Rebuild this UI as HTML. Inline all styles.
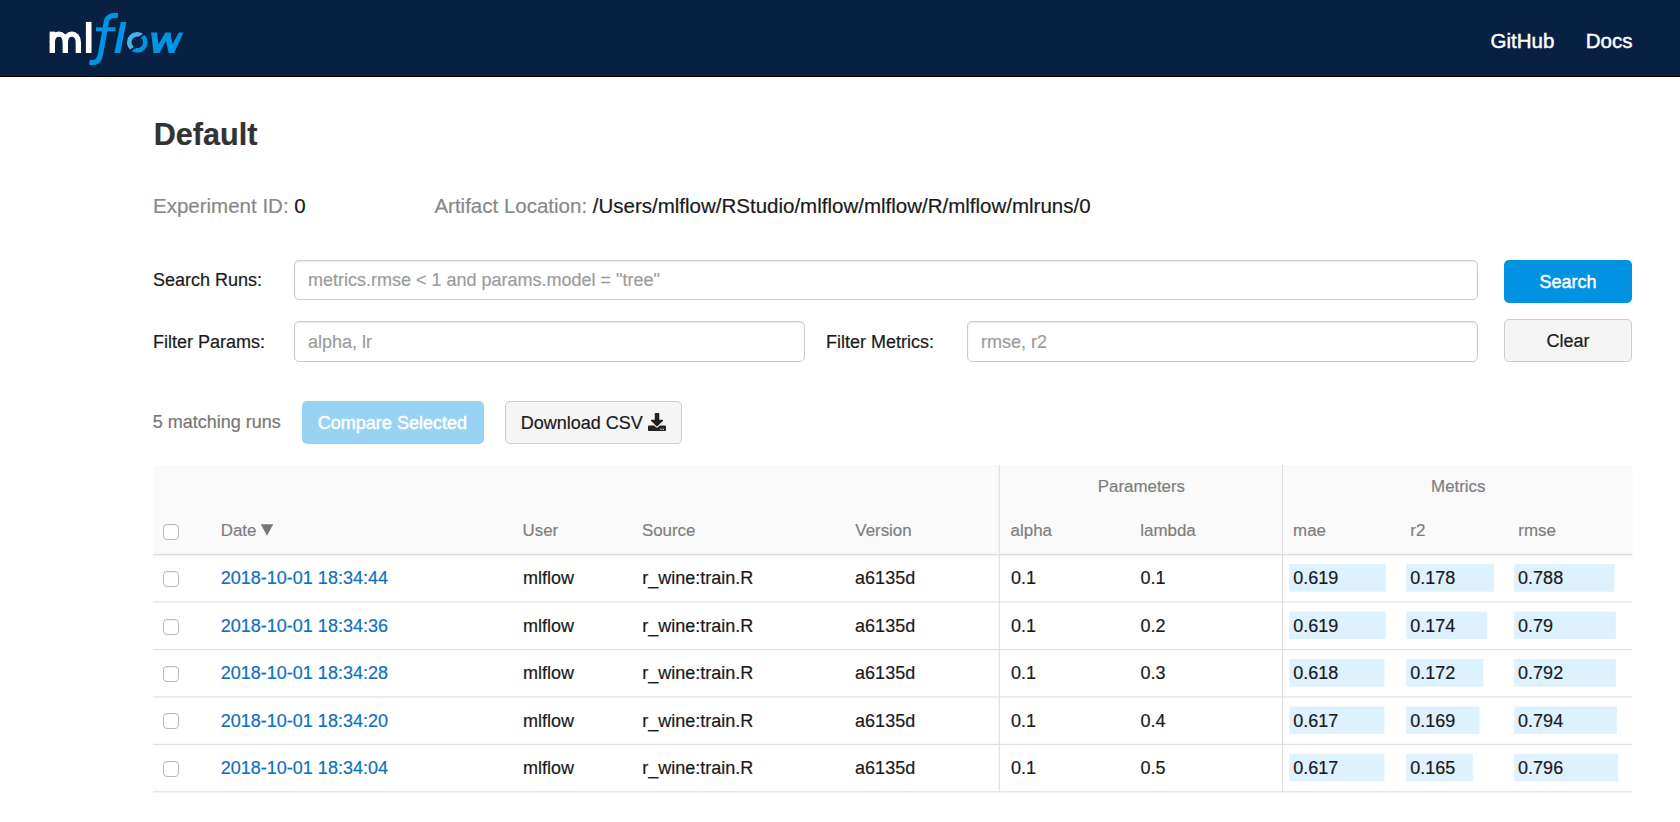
<!DOCTYPE html>
<html lang="en">
<head>
<meta charset="utf-8">
<title>MLflow</title>
<style>
html,body{margin:0;padding:0;}
body{width:1680px;height:822px;overflow:hidden;background:#fff;position:relative;font-family:"Liberation Sans",sans-serif;}
.t{position:absolute;white-space:nowrap;line-height:1;font-family:"Liberation Sans",sans-serif;-webkit-text-stroke:0.2px currentColor;}
.w{-webkit-text-stroke:0.45px #fff;}
.abs{position:absolute;box-sizing:border-box;}
#hdr{left:0;top:0;width:1680px;height:77px;background:#082142;border-bottom:1px solid #000;}
.inp{border:1px solid #ccc;border-radius:5px;background:#fff;box-shadow:inset 0 1px 2px rgba(0,0,0,.1);}
.btn{border-radius:5px;}
.btn-p{background:#0193e1;}
.btn-d{background:#f5f5f5;border:1px solid #ccc;}
.btn-dis{background:#99d3f3;}
.cb{width:16px;height:16px;border:1px solid #b9b9b9;border-radius:4px;background:#fff;box-shadow:inset 0 1px 1px rgba(0,0,0,.04);}
</style>
</head>
<body>

<div id="hdr" class="abs"></div>
<svg class="abs" style="left:40px;top:5px;" width="150" height="65" viewBox="40 5 150 65">
<g fill="none" stroke="#ffffff" stroke-width="5.36" stroke-linecap="butt" stroke-linejoin="round">
<path d="M52.3 53.0 V31.6"/>
<path d="M52.3 42.5 C52.3 31.34 65.32 31.34 65.32 42.5 V53.0"/>
<path d="M65.32 42.5 C65.32 31.34 78.35 31.34 78.35 42.5 V53.0"/>
</g>
<rect x="85.9" y="21.9" width="5.6" height="31.10" fill="#ffffff"/>
<path d="M89.4 62.3 C96.6 63.6 99.3 60.3 100.5 54.6 L106.3 21.9 C107.3 16.6 110.6 15.0 117.9 15.5" fill="none" stroke="#0194e2" stroke-width="5.2" stroke-linecap="butt"/>
<rect x="96.0" y="27.3" width="19.6" height="4.0" fill="#0194e2"/>
<path d="M120.7 22.1 L126.3 22.1 L120.3 52.95 L114.4 52.95 Z" fill="#0194e2"/>
<defs><clipPath id="cl"><polygon points="113.26,60.45 138.42,44.11 135.05,38.91 160.21,22.57 177.28,2.35 97.28,2.35"/></clipPath><clipPath id="cb"><polygon points="114.35,62.13 139.51,45.79 136.14,40.59 161.30,24.25 177.28,82.35 97.28,82.35"/></clipPath></defs>
<circle cx="137.28" cy="42.35" r="8.075" fill="none" stroke="#47b3e8" stroke-width="4.65" clip-path="url(#cl)"/>
<circle cx="137.28" cy="42.35" r="8.075" fill="none" stroke="#0194e2" stroke-width="4.65" clip-path="url(#cb)"/>
<polygon points="151.06,32.43 157.10,32.43 158.46,44.30 165.47,32.43 170.53,32.43 172.48,44.30 178.90,32.43 183.38,32.43 174.23,52.95 168.78,52.95 165.86,40.80 159.63,52.95 153.59,52.95" fill="#0194e2"/>
</svg>
<div class="t w" style="left:1490.50px;top:30.55px;font-size:20.5px;color:#fff;">GitHub</div>
<div class="t w" style="left:1585.70px;top:30.55px;font-size:20.5px;color:#fff;">Docs</div>
<div class="t " style="left:153.70px;top:119.30px;font-size:30.6px;color:#333;font-weight:bold;">Default</div>
<div class="t " style="left:153.00px;top:195.65px;font-size:20.5px;color:#1a1a1a;"><span style="color:#888">Experiment ID:</span> 0</div>
<div class="t " style="left:434.40px;top:195.65px;font-size:20.5px;color:#1a1a1a;"><span style="color:#888">Artifact Location:</span> /Users/mlflow/RStudio/mlflow/mlflow/R/mlflow/mlruns/0</div>
<div class="t " style="left:152.90px;top:271.16px;font-size:18px;color:#1a1a1a;">Search Runs:</div>
<div class="abs inp" style="left:294px;top:260px;width:1184px;height:40px;"></div>
<div class="t " style="left:308.00px;top:271.16px;font-size:18px;color:#9c9c9c;">metrics.rmse &lt; 1 and params.model = "tree"</div>
<div class="abs btn btn-p" style="left:1504px;top:260px;width:128px;height:43px;"></div>
<div class="t w" style="left:1368.00px;width:400px;text-align:center;top:272.56px;font-size:18px;color:#fff;">Search</div>
<div class="t " style="left:152.90px;top:333.06px;font-size:18px;color:#1a1a1a;">Filter Params:</div>
<div class="abs inp" style="left:294px;top:321px;width:511px;height:41px;"></div>
<div class="t " style="left:308.00px;top:333.06px;font-size:18px;color:#9c9c9c;">alpha, lr</div>
<div class="t " style="left:826.00px;top:333.06px;font-size:18px;color:#1a1a1a;">Filter Metrics:</div>
<div class="abs inp" style="left:967px;top:321px;width:511px;height:41px;"></div>
<div class="t " style="left:981.00px;top:333.06px;font-size:18px;color:#9c9c9c;">rmse, r2</div>
<div class="abs btn btn-d" style="left:1504px;top:319px;width:128px;height:43px;"></div>
<div class="t " style="left:1368.00px;width:400px;text-align:center;top:331.56px;font-size:18px;color:#1a1a1a;">Clear</div>
<div class="t " style="left:152.70px;top:412.76px;font-size:18px;color:#777;">5 matching runs</div>
<div class="abs btn btn-dis" style="left:302px;top:401px;width:182px;height:43px;"></div>
<div class="t w" style="left:192.40px;width:400px;text-align:center;top:413.76px;font-size:18px;color:#fff;">Compare Selected</div>
<div class="abs btn btn-d" style="left:505px;top:401px;width:177px;height:43px;"></div>
<div class="t " style="left:520.80px;top:413.76px;font-size:18px;color:#1a1a1a;">Download CSV</div>
<svg class="abs" style="left:648px;top:413px;" width="18" height="18" viewBox="0 0 512 512"><path fill="#222" d="M216 0h80c13.3 0 24 10.7 24 24v168h87.7c17.8 0 26.7 21.5 14.1 34.1L269.7 378.3c-7.500 7.500-19.800 7.500-27.300 0L90.100 226.100c-12.600-12.600-3.700-34.100 14.100-34.100H192V24c0-13.300 10.700-24 24-24zm296 376v112c0 13.300-10.700 24-24 24H24c-13.300 0-24-10.700-24-24V376c0-13.300 10.700-24 24-24h146.700l49 49c20.100 20.100 52.500 20.100 72.600 0l49-49H488c13.300 0 24 10.700 24 24zm-124 88c0-11-9-20-20-20s-20 9-20 20 9 20 20 20 20-9 20-20zm64 0c0-11-9-20-20-20s-20 9-20 20 9 20 20 20 20-9 20-20z"/></svg>
<svg class="abs" style="left:0;top:0;" width="1680" height="822" viewBox="0 0 1680 822">
<rect x="153" y="465" width="1479.5" height="89.80" fill="#fafafa"/>
<rect x="153" y="553.80" width="1479.5" height="1.7" fill="#dfdfdf"/>
<rect x="153" y="601.57" width="1479.5" height="1.1" fill="#dedede"/>
<rect x="153" y="648.99" width="1479.5" height="1.1" fill="#dedede"/>
<rect x="153" y="696.41" width="1479.5" height="1.1" fill="#dedede"/>
<rect x="153" y="743.83" width="1479.5" height="1.1" fill="#dedede"/>
<rect x="153" y="791.25" width="1479.5" height="1.1" fill="#dedede"/>
<rect x="998.8" y="465" width="1.1" height="326.90" fill="#dedede"/>
<rect x="1282.0" y="465" width="1.1" height="326.90" fill="#dedede"/>
<rect x="1289.3" y="564.20" width="96.5" height="27.5" fill="#def1ff"/>
<rect x="1406.3" y="564.20" width="87.7" height="27.5" fill="#def1ff"/>
<rect x="1514.2" y="564.20" width="100.3" height="27.5" fill="#def1ff"/>
<rect x="1289.3" y="611.62" width="96.5" height="27.5" fill="#def1ff"/>
<rect x="1406.3" y="611.62" width="81.1" height="27.5" fill="#def1ff"/>
<rect x="1514.2" y="611.62" width="101.6" height="27.5" fill="#def1ff"/>
<rect x="1289.3" y="659.04" width="95.2" height="27.5" fill="#def1ff"/>
<rect x="1406.3" y="659.04" width="77.1" height="27.5" fill="#def1ff"/>
<rect x="1514.2" y="659.04" width="101.6" height="27.5" fill="#def1ff"/>
<rect x="1289.3" y="706.46" width="95.2" height="27.5" fill="#def1ff"/>
<rect x="1406.3" y="706.46" width="73.2" height="27.5" fill="#def1ff"/>
<rect x="1514.2" y="706.46" width="102.6" height="27.5" fill="#def1ff"/>
<rect x="1289.3" y="753.88" width="95.2" height="27.5" fill="#def1ff"/>
<rect x="1406.3" y="753.88" width="66.5" height="27.5" fill="#def1ff"/>
<rect x="1514.2" y="753.88" width="103.9" height="27.5" fill="#def1ff"/>
</svg>
<div class="t " style="left:941.40px;width:400px;text-align:center;top:478.89px;font-size:16.9px;color:#7e7e7e;">Parameters</div>
<div class="t " style="left:1258.30px;width:400px;text-align:center;top:478.89px;font-size:16.9px;color:#7e7e7e;">Metrics</div>
<div class="abs cb" style="left:163px;top:524px;"></div>
<div class="t " style="left:220.70px;top:522.59px;font-size:16.9px;color:#7e7e7e;">Date</div>
<svg class="abs" style="left:260px;top:523px;" width="14" height="14" viewBox="0 0 14 14"><path d="M0.8 1.3 L13.2 1.3 L7 12.8 Z" fill="#777"/></svg>
<div class="t " style="left:522.50px;top:522.59px;font-size:16.9px;color:#7e7e7e;">User</div>
<div class="t " style="left:641.90px;top:522.59px;font-size:16.9px;color:#7e7e7e;">Source</div>
<div class="t " style="left:855.30px;top:522.59px;font-size:16.9px;color:#7e7e7e;">Version</div>
<div class="t " style="left:1010.60px;top:522.59px;font-size:16.9px;color:#7e7e7e;">alpha</div>
<div class="t " style="left:1140.30px;top:522.59px;font-size:16.9px;color:#7e7e7e;">lambda</div>
<div class="t " style="left:1293.10px;top:522.59px;font-size:16.9px;color:#7e7e7e;">mae</div>
<div class="t " style="left:1410.30px;top:522.59px;font-size:16.9px;color:#7e7e7e;">r2</div>
<div class="t " style="left:1518.30px;top:522.59px;font-size:16.9px;color:#7e7e7e;">rmse</div>
<div class="abs cb" style="left:163px;top:571px;"></div>
<div class="t " style="left:220.80px;top:569.46px;font-size:18px;color:#0f70c0;">2018-10-01 18:34:44</div>
<div class="t " style="left:523.00px;top:569.46px;font-size:18px;color:#1a1a1a;">mlflow</div>
<div class="t " style="left:642.20px;top:569.46px;font-size:18px;color:#1a1a1a;">r_wine:train.R</div>
<div class="t " style="left:855.10px;top:569.46px;font-size:18px;color:#1a1a1a;">a6135d</div>
<div class="t " style="left:1010.90px;top:569.46px;font-size:18px;color:#1a1a1a;">0.1</div>
<div class="t " style="left:1140.50px;top:569.46px;font-size:18px;color:#1a1a1a;">0.1</div>
<div class="t " style="left:1293.20px;top:569.46px;font-size:18px;color:#1a1a1a;">0.619</div>
<div class="t " style="left:1410.20px;top:569.46px;font-size:18px;color:#1a1a1a;">0.178</div>
<div class="t " style="left:1518.10px;top:569.46px;font-size:18px;color:#1a1a1a;">0.788</div>
<div class="abs cb" style="left:163px;top:619px;"></div>
<div class="t " style="left:220.80px;top:616.88px;font-size:18px;color:#0f70c0;">2018-10-01 18:34:36</div>
<div class="t " style="left:523.00px;top:616.88px;font-size:18px;color:#1a1a1a;">mlflow</div>
<div class="t " style="left:642.20px;top:616.88px;font-size:18px;color:#1a1a1a;">r_wine:train.R</div>
<div class="t " style="left:855.10px;top:616.88px;font-size:18px;color:#1a1a1a;">a6135d</div>
<div class="t " style="left:1010.90px;top:616.88px;font-size:18px;color:#1a1a1a;">0.1</div>
<div class="t " style="left:1140.50px;top:616.88px;font-size:18px;color:#1a1a1a;">0.2</div>
<div class="t " style="left:1293.20px;top:616.88px;font-size:18px;color:#1a1a1a;">0.619</div>
<div class="t " style="left:1410.20px;top:616.88px;font-size:18px;color:#1a1a1a;">0.174</div>
<div class="t " style="left:1518.10px;top:616.88px;font-size:18px;color:#1a1a1a;">0.79</div>
<div class="abs cb" style="left:163px;top:666px;"></div>
<div class="t " style="left:220.80px;top:664.30px;font-size:18px;color:#0f70c0;">2018-10-01 18:34:28</div>
<div class="t " style="left:523.00px;top:664.30px;font-size:18px;color:#1a1a1a;">mlflow</div>
<div class="t " style="left:642.20px;top:664.30px;font-size:18px;color:#1a1a1a;">r_wine:train.R</div>
<div class="t " style="left:855.10px;top:664.30px;font-size:18px;color:#1a1a1a;">a6135d</div>
<div class="t " style="left:1010.90px;top:664.30px;font-size:18px;color:#1a1a1a;">0.1</div>
<div class="t " style="left:1140.50px;top:664.30px;font-size:18px;color:#1a1a1a;">0.3</div>
<div class="t " style="left:1293.20px;top:664.30px;font-size:18px;color:#1a1a1a;">0.618</div>
<div class="t " style="left:1410.20px;top:664.30px;font-size:18px;color:#1a1a1a;">0.172</div>
<div class="t " style="left:1518.10px;top:664.30px;font-size:18px;color:#1a1a1a;">0.792</div>
<div class="abs cb" style="left:163px;top:713px;"></div>
<div class="t " style="left:220.80px;top:711.72px;font-size:18px;color:#0f70c0;">2018-10-01 18:34:20</div>
<div class="t " style="left:523.00px;top:711.72px;font-size:18px;color:#1a1a1a;">mlflow</div>
<div class="t " style="left:642.20px;top:711.72px;font-size:18px;color:#1a1a1a;">r_wine:train.R</div>
<div class="t " style="left:855.10px;top:711.72px;font-size:18px;color:#1a1a1a;">a6135d</div>
<div class="t " style="left:1010.90px;top:711.72px;font-size:18px;color:#1a1a1a;">0.1</div>
<div class="t " style="left:1140.50px;top:711.72px;font-size:18px;color:#1a1a1a;">0.4</div>
<div class="t " style="left:1293.20px;top:711.72px;font-size:18px;color:#1a1a1a;">0.617</div>
<div class="t " style="left:1410.20px;top:711.72px;font-size:18px;color:#1a1a1a;">0.169</div>
<div class="t " style="left:1518.10px;top:711.72px;font-size:18px;color:#1a1a1a;">0.794</div>
<div class="abs cb" style="left:163px;top:761px;"></div>
<div class="t " style="left:220.80px;top:759.14px;font-size:18px;color:#0f70c0;">2018-10-01 18:34:04</div>
<div class="t " style="left:523.00px;top:759.14px;font-size:18px;color:#1a1a1a;">mlflow</div>
<div class="t " style="left:642.20px;top:759.14px;font-size:18px;color:#1a1a1a;">r_wine:train.R</div>
<div class="t " style="left:855.10px;top:759.14px;font-size:18px;color:#1a1a1a;">a6135d</div>
<div class="t " style="left:1010.90px;top:759.14px;font-size:18px;color:#1a1a1a;">0.1</div>
<div class="t " style="left:1140.50px;top:759.14px;font-size:18px;color:#1a1a1a;">0.5</div>
<div class="t " style="left:1293.20px;top:759.14px;font-size:18px;color:#1a1a1a;">0.617</div>
<div class="t " style="left:1410.20px;top:759.14px;font-size:18px;color:#1a1a1a;">0.165</div>
<div class="t " style="left:1518.10px;top:759.14px;font-size:18px;color:#1a1a1a;">0.796</div>
</body>
</html>
